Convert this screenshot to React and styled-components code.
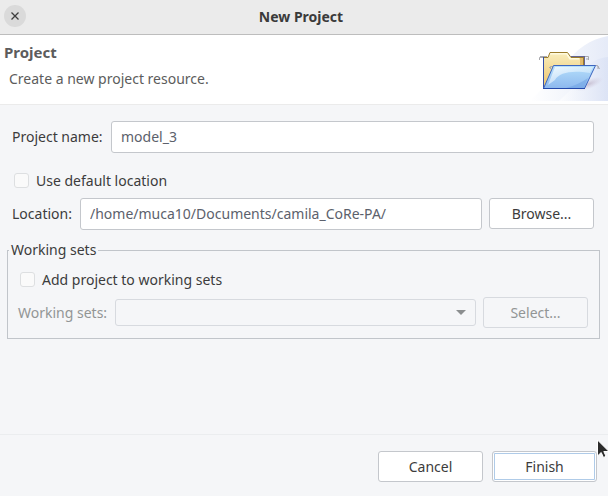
import React, { useState } from 'react';
import styled, { createGlobalStyle } from 'styled-components';

const GlobalStyle = createGlobalStyle`
  * { box-sizing: border-box; }
  body {
    margin: 0;
    background: #f5f6f7;
    color: #3c3c3c;
    font: 14px/20px "Noto Sans", "Open Sans", sans-serif;
  }
  button, input, select { font: inherit; color: inherit; margin: 0; }
`;

const Dialog = styled.div`
  position: relative;
  display: flex;
  flex-direction: column;
  min-height: 100vh;
  background: #f5f6f8;
`;

const TitleBar = styled.header`
  display: grid;
  grid-template-columns: 28px 1fr 28px;
  align-items: center;
  height: 35px;
  padding: 0 4px;
  background: #ebebeb;
  border-bottom: 1px solid #bdbdbd;
`;

const CloseButton = styled.button`
  display: grid;
  place-items: center;
  width: 22px;
  height: 22px;
  margin-bottom: 2px;
  padding: 0;
  border: 0;
  border-radius: 50%;
  background: #dadada;
`;

const Title = styled.h1`
  margin: 0;
  padding-right: 6px;
  font-size: 14px;
  line-height: 20px;
  font-weight: 700;
  text-align: center;
  color: #3a3a3a;
`;

const Banner = styled.section`
  display: flex;
  justify-content: space-between;
  height: 70px;
  background: #fff;
  border-bottom: 1px solid #ebebeb;
  color: #5c5c5c;
`;

const BannerText = styled.div`
  padding: 7px 4px;
`;

const BannerTitle = styled.h2`
  margin: 0;
  font-size: 15px;
  line-height: 20px;
  font-weight: 700;
`;

const BannerMessage = styled.p`
  margin: 7px 0 0 5px;
`;

const Form = styled.form`
  display: flex;
  flex-direction: column;
  flex: 1;
`;

const Content = styled.main`
  flex: 1;
  padding: 16px 8px 0 7px;
`;

const FieldRow = styled.div`
  display: flex;
  align-items: ${(p) => p.$align || 'flex-start'};
  gap: 7px;
  padding: ${(p) => p.$pad || '0 6px 0 5px'};
`;

const Label = styled.label`
  flex: 0 0 ${(p) => p.$width};
  line-height: ${(p) => (p.$disabled ? '30px' : '32px')};
  white-space: nowrap;
  color: ${(p) => (p.$disabled ? '#929595' : 'inherit')};
`;

const TextInput = styled.input`
  flex: 1;
  min-width: 0;
  height: 32px;
  padding: 0 9px 2px;
  border: 1px solid #c4c7cc;
  border-radius: 3px;
  outline: 0;
  background: #fff;
  color: #5c616c;
`;

const Button = styled.button`
  flex: 0 0 105px;
  height: 31px;
  padding: 0;
  border: 1px solid #c4c7cc;
  border-radius: 3px;
  background: #fff;
  box-shadow: ${(p) => (p.$primary ? 'inset 0 0 0 1px #fff, inset 0 0 0 2px #afcbe8' : 'none')};

  &:disabled {
    border-color: #d7dadf;
    background: #f5f6f8;
    color: #929595;
  }
`;

const CheckLabel = styled.label`
  display: flex;
  align-items: flex-start;
  gap: 7px;
  width: fit-content;
  margin: ${(p) => p.$margin};
`;

const CheckBox = styled.input`
  appearance: none;
  width: 15px;
  height: 15px;
  && { margin-top: 2px; }
  border: 1px solid #dddfe1;
  border-radius: 3px;
  background: #fafafa;

  &:checked { background: #5294e2; }
`;

const Group = styled.fieldset`
  min-width: 0;
  margin: 10px 0 0;
  padding: 10px 11px;
  border: 1px solid #c1c5ca;
  padding-left: 10px;
`;

const Legend = styled.legend`
  margin-left: -9px;
  padding: 0 2px;
  line-height: 20px;
`;

const SelectWrap = styled.div`
  display: grid;
  flex: 1;
  align-items: center;

  & > * { grid-area: 1 / 1; }
  & > svg { justify-self: end; margin-right: 10px; pointer-events: none; }
`;

const Select = styled.select`
  appearance: none;
  width: 100%;
  height: 27px;
  padding: 0 28px 0 8px;
  border: 1px solid #d7dadf;
  border-radius: 3px;
  background: #f5f6f8;
  opacity: 1;
`;

const Footer = styled.footer`
  display: flex;
  justify-content: flex-end;
  gap: 9px;
  padding: 16px 11px 14px;
  border-top: 1px solid #ebedef;
`;

const Pointer = styled.svg`
  position: absolute;
  right: -2px;
  bottom: 35px;
  pointer-events: none;
`;

function FolderArt() {
  return (
    <svg width="78" height="66" viewBox="0 0 78 66" aria-hidden="true">
      <defs>
        <linearGradient id="sky" x1="0" x2="1">
          <stop offset="0" stopColor="#fff" />
          <stop offset="1" stopColor="#d8e0f4" />
        </linearGradient>
        <linearGradient id="gold" x1="0" y1="0" x2="0" y2="1">
          <stop offset="0" stopColor="#f9eebd" />
          <stop offset="1" stopColor="#edc269" />
        </linearGradient>
        <linearGradient id="blue" x1="0" y1="0" x2="0" y2="1">
          <stop offset="0" stopColor="#b6e0fb" />
          <stop offset="1" stopColor="#8db8ee" />
        </linearGradient>
        <linearGradient id="gloss" x1="0" y1="0" x2="1" y2="1">
          <stop offset="0" stopColor="#fff" stopOpacity="0.8" />
          <stop offset="1" stopColor="#e4f4ff" stopOpacity="0.25" />
        </linearGradient>
        <radialGradient id="shade">
          <stop offset="0" stopColor="#a996ae" stopOpacity="0.5" />
          <stop offset="1" stopColor="#c9bdd5" stopOpacity="0" />
        </radialGradient>
      </defs>
      <path d="M78 1C61 4 45 14 35 31L0 66H78Z" fill="url(#sky)" opacity=".65" />
      <path d="M78 22C63 23 54 32 47 49L29 66H78Z" fill="url(#sky)" opacity=".7" />
      <ellipse cx="59" cy="49" rx="15" ry="5" transform="rotate(-22 59 49)" fill="url(#shade)" />
      <path d="M13.5 53.5V22.5H18L20 17.5H37.5L41 22.5H50.5V45L47 53.5Z" fill="url(#gold)" />
      <path d="M20 18.5H37L40 23.5H49" fill="none" stroke="#fffbe0" strokeWidth="2" />
      <path d="M13.5 22.5H18L20 17.5H37.5L41 22.5H54.5" fill="none" stroke="#9b7c2b" />
      <path d="M50 23H54V30H50Z" fill="#e4bc6d" />
      <path d="M13.5 22V53.5" stroke="#334fa6" />
      <path d="M54.5 22V30M41 21.5H55" fill="none" stroke="#666591" />
      <path d="M53.5 23V30" stroke="#9b7c2b" />
      <path d="M9.5 25V22.5H13M10 21.5H17M55 21.5H58.5V25M57 23V25M20.5 34V31.5H24M19 32.5H21M65 30.5H67.5L69.5 34M68 31V34" fill="none" stroke="#a9a9ad" />
      <path d="M23.5 30.5H65.5L54.5 53.5H13.5Z" fill="url(#blue)" />
      <path d="M25 32H63L60 38C43 35 29 37 25 45L18 50Z" fill="url(#gloss)" />
      <path d="M58 43Q48 50 36 53H54Z" fill="#659ce0" opacity=".45" />
      <path d="M13.5 53.5L23.5 30.5H65.5L54.5 53.5Z" fill="none" stroke="#3d66c0" />
      <path d="M13 53.5H55" stroke="#2449aa" />
    </svg>
  );
}

export default function App() {
  const [name, setName] = useState('model_3');
  const [location, setLocation] = useState('/home/muca10/Documents/camila_CoRe-PA/');

  return (
    <Dialog role="dialog" aria-labelledby="title">
      <GlobalStyle />
      <TitleBar>
        <CloseButton type="button" aria-label="Close">
          <svg width="8" height="8" viewBox="0 0 8 8" aria-hidden="true">
            <path d="M.5 .5L7.5 7.5M7.5 .5L.5 7.5" stroke="#3d3d3d" strokeWidth="1.3" />
          </svg>
        </CloseButton>
        <Title id="title">New Project</Title>
      </TitleBar>
      <Banner>
        <BannerText>
          <BannerTitle>Project</BannerTitle>
          <BannerMessage>Create a new project resource.</BannerMessage>
        </BannerText>
        <FolderArt />
      </Banner>
      <Form onSubmit={(e) => e.preventDefault()}>
        <Content>
          <FieldRow>
            <Label htmlFor="name" $width="92px">Project name:</Label>
            <TextInput id="name" value={name} onChange={(e) => setName(e.target.value)} />
          </FieldRow>
          <CheckLabel $margin="18px 0 7px 7px">
            <CheckBox type="checkbox" />
            Use default location
          </CheckLabel>
          <FieldRow>
            <Label htmlFor="location" $width="61px">Location:</Label>
            <TextInput id="location" value={location} onChange={(e) => setLocation(e.target.value)} />
            <Button type="button">Browse...</Button>
          </FieldRow>
          <Group>
            <Legend>Working sets</Legend>
            <CheckLabel $margin="0 0 7px 2px">
              <CheckBox type="checkbox" />
              Add project to working sets
            </CheckLabel>
            <FieldRow $align="center" $pad="0">
              <Label htmlFor="sets" $width="90px" $disabled>Working sets:</Label>
              <SelectWrap>
                <Select id="sets" disabled />
                <svg width="10" height="5" viewBox="0 0 10 5" aria-hidden="true">
                  <path d="M0 0H10L5 5Z" fill="#8b8e8f" />
                </svg>
              </SelectWrap>
              <Button type="button" disabled>Select...</Button>
            </FieldRow>
          </Group>
        </Content>
        <Footer>
          <Button type="button">Cancel</Button>
          <Button type="submit" $primary>Finish</Button>
        </Footer>
      </Form>
      <Pointer width="13" height="22" viewBox="0 0 13 22" aria-hidden="true">
        <path d="M.5 1V17L4.2 13.5L6.5 18.5L9 17.3L6.8 12.5H12Z" fill="#2b2b2b" stroke="#fff" />
      </Pointer>
    </Dialog>
  );
}
